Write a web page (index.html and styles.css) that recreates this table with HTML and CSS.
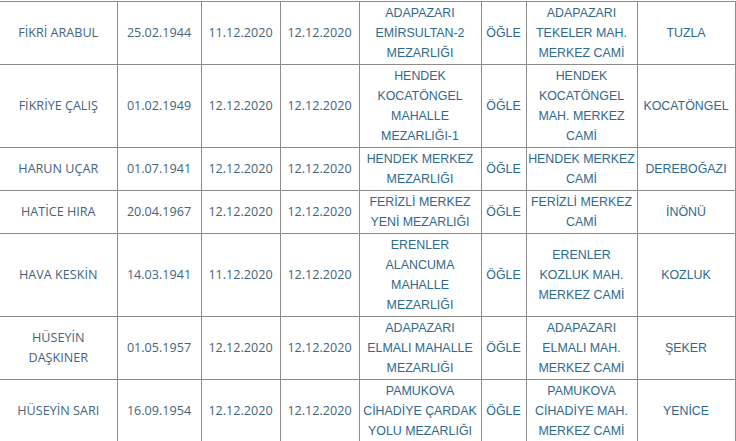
FILE: index.html
```html
<!DOCTYPE html>
<html lang="tr">
<head>
<meta charset="utf-8">
<link rel="stylesheet" href="styles.css">
</head>
<body>
<table class="list">
<colgroup>
<col class="c-name"><col class="c-date"><col class="c-date2"><col class="c-date2"><col class="c-place"><col class="c-time"><col class="c-mosque"><col class="c-hood">
</colgroup>
<tbody>
<tr class="r3">
<td class="n">F&#304;KR&#304; ARABUL</td><td class="n">25.02.1944</td><td class="n">11.12.2020</td><td class="n">12.12.2020</td>
<td>ADAPAZARI<br>EM&#304;RSULTAN-2<br>MEZARLI&#286;I</td><td>&#214;&#286;LE</td><td>ADAPAZARI<br>TEKELER MAH.<br>MERKEZ CAM&#304;</td><td>TUZLA</td>
</tr>
<tr class="r4">
<td class="n">F&#304;KR&#304;YE &#199;ALI&#350;</td><td class="n">01.02.1949</td><td class="n">12.12.2020</td><td class="n">12.12.2020</td>
<td>HENDEK<br>KOCAT&#214;NGEL<br>MAHALLE<br>MEZARLI&#286;I-1</td><td>&#214;&#286;LE</td><td>HENDEK<br>KOCAT&#214;NGEL<br>MAH. MERKEZ<br>CAM&#304;</td><td>KOCAT&#214;NGEL</td>
</tr>
<tr class="r2">
<td class="n">HARUN U&#199;AR</td><td class="n">01.07.1941</td><td class="n">12.12.2020</td><td class="n">12.12.2020</td>
<td>HENDEK MERKEZ<br>MEZARLI&#286;I</td><td>&#214;&#286;LE</td><td>HENDEK MERKEZ<br>CAM&#304;</td><td>DEREBO&#286;AZI</td>
</tr>
<tr class="r2">
<td class="n">HAT&#304;CE HIRA</td><td class="n">20.04.1967</td><td class="n">12.12.2020</td><td class="n">12.12.2020</td>
<td>FER&#304;ZL&#304; MERKEZ<br>YEN&#304; MEZARLI&#286;I</td><td>&#214;&#286;LE</td><td>FER&#304;ZL&#304; MERKEZ<br>CAM&#304;</td><td>&#304;N&#214;N&#220;</td>
</tr>
<tr class="r4">
<td class="n">HAVA KESK&#304;N</td><td class="n">14.03.1941</td><td class="n">11.12.2020</td><td class="n">12.12.2020</td>
<td>ERENLER<br>ALANCUMA<br>MAHALLE<br>MEZARLI&#286;I</td><td>&#214;&#286;LE</td><td>ERENLER<br>KOZLUK MAH.<br>MERKEZ CAM&#304;</td><td>KOZLUK</td>
</tr>
<tr class="r3">
<td class="n">H&#220;SEY&#304;N<br>DA&#350;KINER</td><td class="n">01.05.1957</td><td class="n">12.12.2020</td><td class="n">12.12.2020</td>
<td>ADAPAZARI<br>ELMALI MAHALLE<br>MEZARLI&#286;I</td><td>&#214;&#286;LE</td><td>ADAPAZARI<br>ELMALI MAH.<br>MERKEZ CAM&#304;</td><td>&#350;EKER</td>
</tr>
<tr class="r3">
<td class="n">H&#220;SEY&#304;N SARI</td><td class="n">16.09.1954</td><td class="n">12.12.2020</td><td class="n">12.12.2020</td>
<td>PAMUKOVA<br>C&#304;HAD&#304;YE &#199;ARDAK<br>YOLU MEZARLI&#286;I</td><td>&#214;&#286;LE</td><td>PAMUKOVA<br>C&#304;HAD&#304;YE MAH.<br>MERKEZ CAM&#304;</td><td>YEN&#304;CE</td>
</tr>
</tbody>
</table>
</body>
</html>
```
FILE: styles.css
```css
html, body {
  margin: 0;
  padding: 0;
  background: #ffffff;
}
body {
  padding-top: 1px;
}
.list {
  border-collapse: collapse;
  table-layout: fixed;
  width: 735px;
}
.c-name { width: 117px; }
.c-date { width: 84px; }
.c-date2 { width: 79px; }
.c-place { width: 122px; }
.c-time { width: 45px; }
.c-mosque { width: 111px; }
.c-hood { width: 98px; }
.list td {
  border: 1px solid #8c8c8c;
  padding: 1px 0;
  text-align: center;
  vertical-align: middle;
  white-space: nowrap;
  font-family: "Liberation Sans", Arial, sans-serif;
  font-size: 12.4px;
  line-height: 20px;
  color: #2f6a8c;
}
.list td:first-child {
  border-left: none;
}
.list td.n {
  font-family: "Open Sans", "Noto Sans", sans-serif;
  font-size: 12.6px;
  color: #44647a;
}
.r2 { height: 43px; }
.r3 { height: 62px; }
.r4 { height: 83px; }
```
